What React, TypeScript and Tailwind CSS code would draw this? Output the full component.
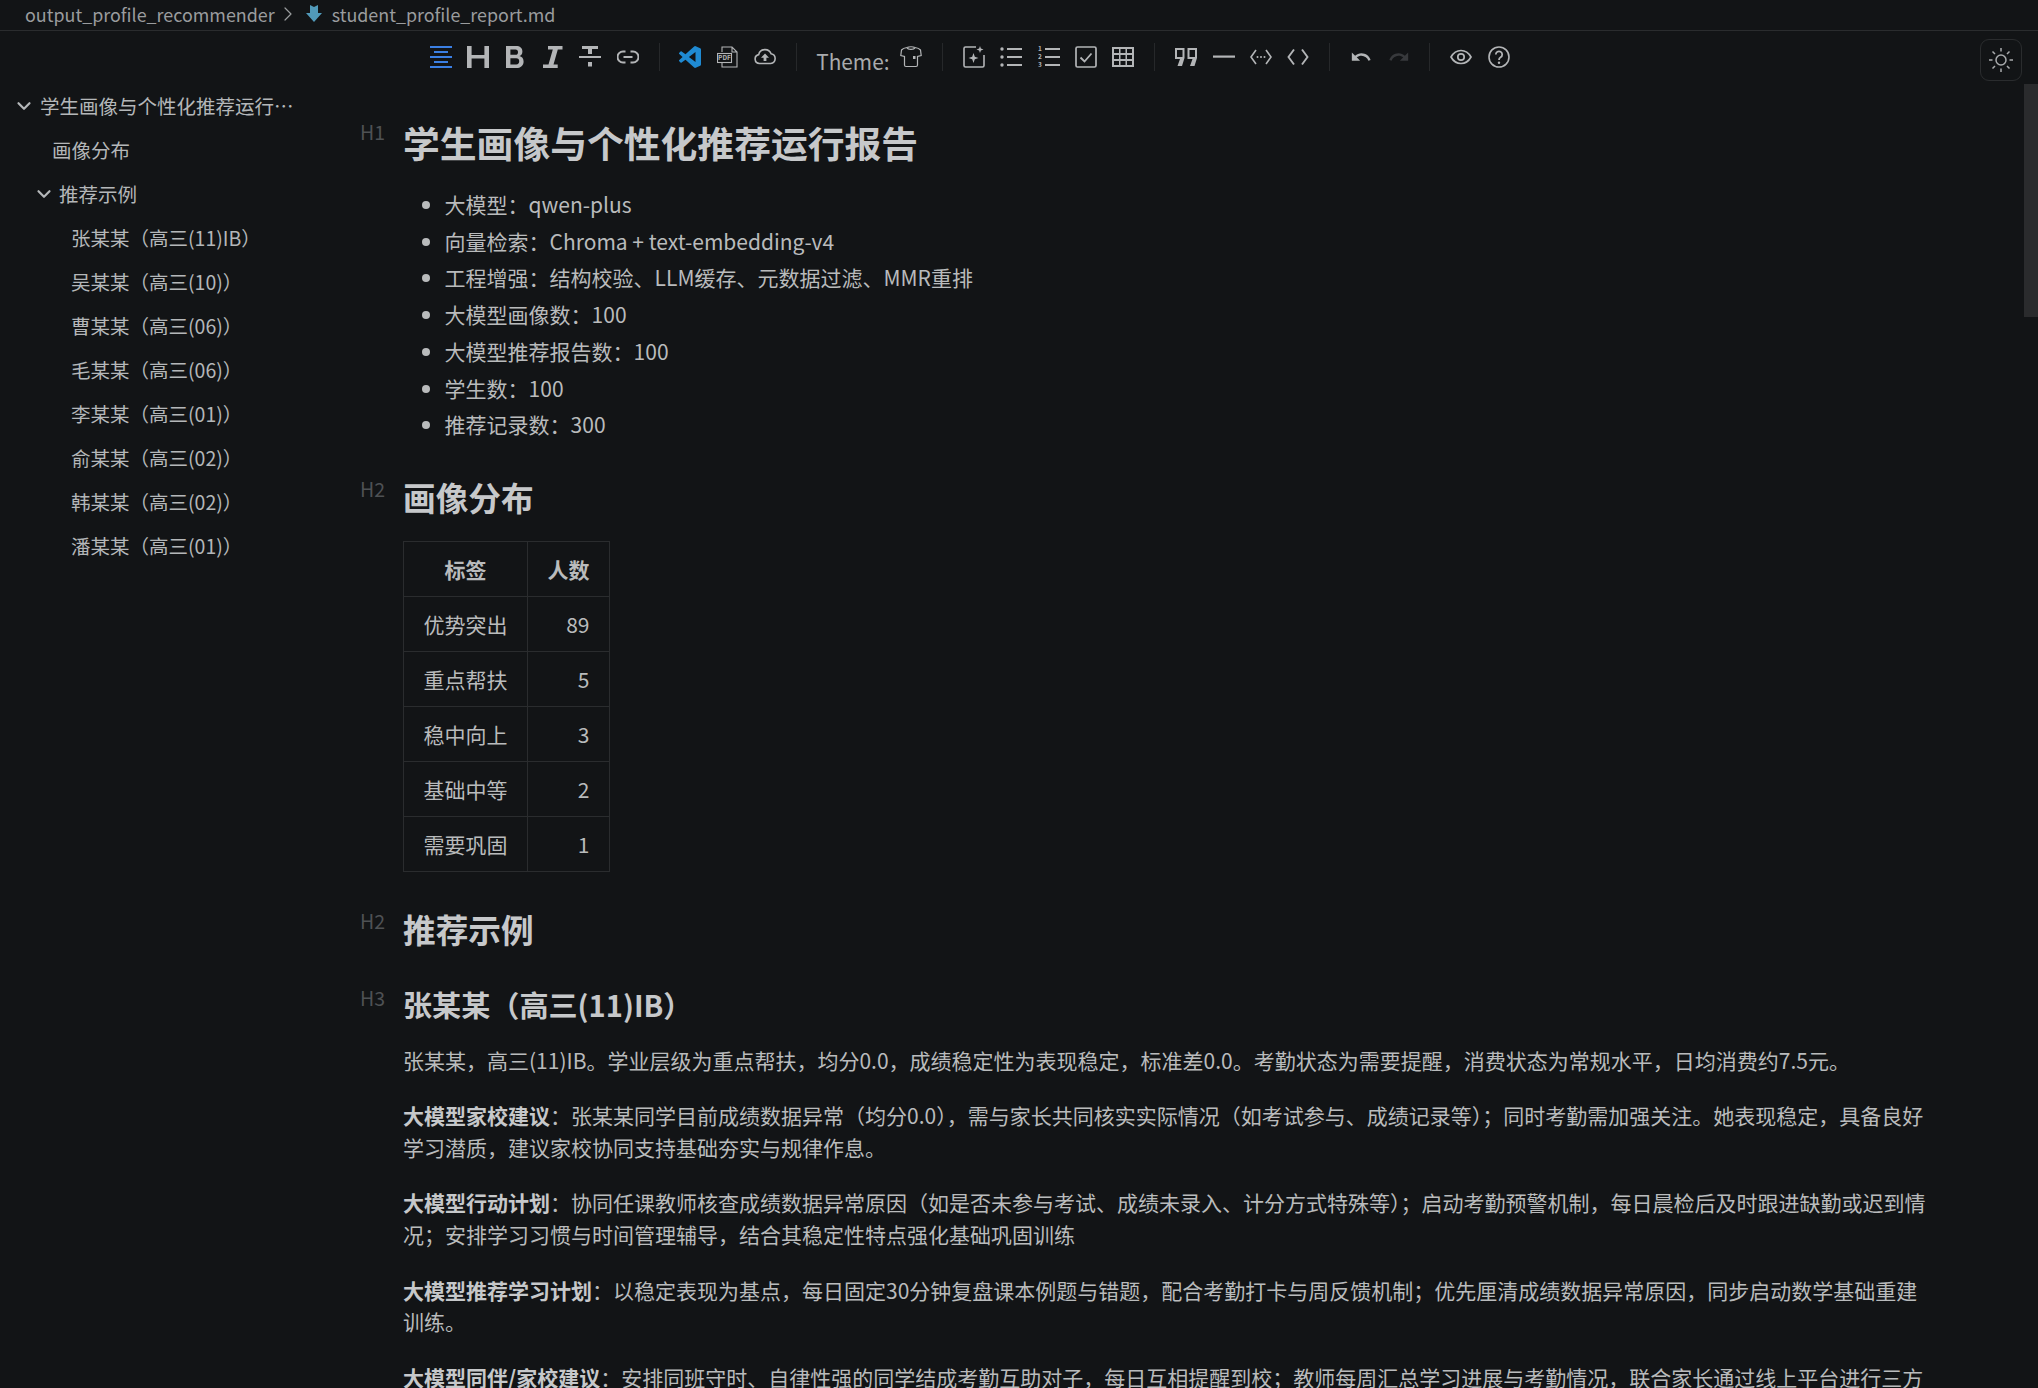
import type { ReactNode } from 'react'
import { ChevronDown, ChevronRight } from 'lucide-react'

// toolbar icons, all on a 22px box
function Svg({ children, vb = '0 0 22 22', cls = 'text-[#b3b5b7]' }: { children: ReactNode; vb?: string; cls?: string }) {
  return (
    <svg viewBox={vb} className={`w-[22px] h-[22px] ${cls}`} fill="currentColor">
      {children}
    </svg>
  )
}

const line = { fill: 'none', stroke: 'currentColor', strokeWidth: 1.6 } as const

const AlignIcon = () => (
  <Svg cls="text-[#3b7fe3]">
    <path d="M0 0h22v2H0zM4 5h14v2H4zM0 10h22v2H0zM4 15h14v2H4zM0 20h22v2H0z" />
  </Svg>
)
const HIcon = () => (
  <Svg>
    <path d="M0 0h4.600v9h12.800V0H22v22h-4.600v-9.600H4.600V22H0z" />
  </Svg>
)
const BIcon = () => (
  <Svg>
    <path fillRule="evenodd" d="M2 0h10c4 0 6.400 2 6.400 5.400 0 2.400-1.200 4-3 4.700 2.600.6 4.200 2.500 4.200 5.300 0 4-2.800 6.600-7.400 6.600H2zM6.400 3.600v5.200h5c1.800 0 2.600-1 2.600-2.600s-.8-2.600-2.600-2.600zM6.400 12.200v6.200h5.800c2 0 3-1.200 3-3.100s-1-3.100-3-3.100z" />
  </Svg>
)
const IIcon = () => (
  <Svg>
    <path d="M6 0h14.500v3.600H15.800L11.500 18.400h4.200V22H1v-3.600h5.500L10.800 3.600H6z" />
  </Svg>
)
const StrikeIcon = () => (
  <Svg>
    <path d="M3 0h16v3h-6v5H9V3H3zM0 10h22v2H0zM9 16h4v4.500H9z" />
  </Svg>
)
const LinkIcon = () => (
  <Svg>
    <path {...line} strokeWidth={2} d="M8.500 5.500H6a5.500 5.500 0 0 0 0 11h2.500M13.500 5.500H16a5.500 5.500 0 0 1 0 11h-2.500M6.500 11h9" />
  </Svg>
)
const VscodeIcon = () => (
  <Svg vb="0 0 24 24" cls="text-[#1f8ad2]">
    <path d="M23.15 2.587L18.21.21a1.494 1.494 0 0 0-1.705.29l-9.46 8.63-4.12-3.128a.999.999 0 0 0-1.276.057L.327 7.261A1 1 0 0 0 .326 8.74L3.899 12 .326 15.26a1 1 0 0 0 .001 1.479L1.65 17.94a.999.999 0 0 0 1.276.057l4.12-3.128 9.46 8.63a1.492 1.492 0 0 0 1.704.29l4.942-2.377A1.5 1.5 0 0 0 24 20.06V3.939a1.5 1.500 0 0 0-.85-1.352zm-5.146 14.861L10.826 12l7.178-5.448v10.896z" />
  </Svg>
)
const PdfIcon = () => (
  <Svg>
    <path {...line} strokeWidth={1.1} d="M5 6V1h10l5 5v15H5v-4M15 1v5h5" />
    <rect x="0.500" y="7.500" width="14" height="9" fill="#121416" stroke="currentColor" strokeWidth="1.100" />
    <text x="7.500" y="14.300" textAnchor="middle" fontSize="6.500" fontWeight="700" fill="currentColor">PDF</text>
  </Svg>
)
const CloudIcon = () => (
  <Svg>
    <path {...line} d="M5.500 17.500a4.500 4.500 0 0 1-.8-8.900 6.500 6.500 0 0 1 12.400-.8 4.900 4.900 0 0 1-.4 9.700z" />
    <path d="M11 7.500l4 4.200h-2.600v3.200H9.600v-3.200H7z" />
  </Svg>
)
const ShirtIcon = () => (
  <Svg>
    <path {...line} strokeWidth={1.200} d="M7 1.500c-2.500.3-4.500 1.300-5.500 2.500L.8 9.500 4.500 10.500V19a1.500 1.500 0 0 0 1.500 1.500h10a1.500 1.500 0 0 0 1.500-1.500V10.500l3.700-1-.7-5.500C19.500 2.800 17.500 1.800 15 1.500c-1 2.500-7 2.500-8 0z" />
    <path {...line} strokeWidth={1.200} d="M7.500 1.500c1-1 6-1 7 0" />
    <rect x="13" y="10" width="2.500" height="3" />
  </Svg>
)
const SparkIcon = () => (
  <Svg>
    <path {...line} strokeWidth={1.600} d="M13 1H2.500A1.500 1.500 0 0 0 1 2.500v17A1.500 1.500 0 0 0 2.500 21h17a1.500 1.500 0 0 0 1.500-1.500V9" />
    <path d="M10.500 7l1.300 3.700 3.700 1.300-3.700 1.300-1.300 3.700-1.300-3.700L5.500 12l3.700-1.300zM17 0l.9 2.600 2.600.9-2.600.9L17 7l-.9-2.600-2.600-.9 2.600-.9z" />
  </Svg>
)
const ListIcon = () => (
  <Svg>
    <circle cx="2" cy="3" r="1.700" />
    <circle cx="2" cy="11" r="1.700" />
    <circle cx="2" cy="19" r="1.700" />
    <path d="M7 2h15v2H7zM7 10h15v2H7zM7 18h15v2H7z" />
  </Svg>
)
const OlIcon = () => (
  <Svg>
    <text x="2" y="5" textAnchor="middle" fontSize="6.500" fontWeight="700" fill="currentColor">1</text>
    <text x="2" y="13" textAnchor="middle" fontSize="6.500" fontWeight="700" fill="currentColor">2</text>
    <text x="2" y="21" textAnchor="middle" fontSize="6.500" fontWeight="700" fill="currentColor">3</text>
    <path d="M7 2h15v2H7zM7 10h15v2H7zM7 18h15v2H7z" />
  </Svg>
)
const CheckIcon = () => (
  <Svg>
    <rect x="1" y="1" width="20" height="20" rx="1.500" {...line} strokeWidth={1.700} />
    <path {...line} strokeWidth={1.800} d="M5.500 11.500l4 4 7-8" />
  </Svg>
)
const TableIcon = () => (
  <Svg>
    <path fillRule="evenodd" d="M0 1h22v20H0zM2 3v4h5V3zM8.500 3v4h5V3zM15 3v4h5V3zM2 9v4h5V9zM8.500 9v4h5V9zM15 9v4h5V9zM2 15v4h5v-4zM8.500 15v4h5v-4zM15 15v4h5v-4z" />
  </Svg>
)
const QuoteIcon = () => (
  <Svg>
    <path fillRule="evenodd" d="M0 2h9.500v10L7 20H2.500L5 13H0zM2 4v7h5.500V4zM12.500 2H22v10l-2.500 8H15l2.500-7h-5zM14.500 4v7H20V4z" />
  </Svg>
)
const HrIcon = () => (
  <Svg>
    <path d="M0 9.500h22v2.200H0z" />
  </Svg>
)
const InlineCodeIcon = () => (
  <Svg>
    <path {...line} d="M6 4L1 11l5 7M16 4l5 7-5 7" />
    <circle cx="7.500" cy="11" r="1" />
    <circle cx="11" cy="11" r="1" />
    <circle cx="14.500" cy="11" r="1" />
  </Svg>
)
const CodeIcon = () => (
  <Svg>
    <path {...line} strokeWidth={1.900} d="M7 3.500L1.500 11 7 18.500M15 3.500l5.500 7.500-5.500 7.500" />
  </Svg>
)
const UndoIcon = () => (
  <Svg vb="0 0 24 24">
    <path d="M12.500 8c-2.650 0-5.050.99-6.900 2.600L2 7v9h9l-3.620-3.620c1.390-1.160 3.160-1.880 5.120-1.880 3.540 0 6.550 2.310 7.600 5.500l2.370-.78C21.080 11.030 17.150 8 12.500 8z" />
  </Svg>
)
const RedoIcon = () => (
  <Svg vb="0 0 24 24" cls="text-[#37393c]">
    <path d="M18.400 10.600C16.550 8.990 14.150 8 11.500 8c-4.650 0-8.580 3.030-9.960 7.220L3.900 16c1.050-3.190 4.050-5.500 7.600-5.500 1.950 0 3.730.72 5.120 1.880L13 16h9V7l-3.600 3.600z" />
  </Svg>
)
const EyeIcon = () => (
  <Svg>
    <path {...line} strokeWidth={1.700} d="M1 11c2.500-4.500 6-6.500 10-6.500S18.500 6.500 21 11c-2.500 4.500-6 6.500-10 6.500S3.500 15.500 1 11z" />
    <circle cx="11" cy="11" r="3.200" {...line} strokeWidth={1.700} />
  </Svg>
)
const HelpIcon = () => (
  <Svg>
    <circle cx="11" cy="11" r="10" {...line} strokeWidth={1.600} />
    <path {...line} strokeWidth={1.800} d="M7.800 8.500a3.200 3.200 0 1 1 4.800 2.800c-1.100.7-1.600 1.300-1.600 2.700" />
    <circle cx="11" cy="16.800" r="1.200" />
  </Svg>
)
const SunIcon = () => (
  <svg viewBox="0 0 24 24" className="w-6 h-6 text-[#a9abad]" fill="none" stroke="currentColor" strokeWidth="1.500">
    <circle cx="12" cy="12" r="5" />
    <path d="M12 0v3.500M12 20.500V24M0 12h3.500M20.500 12H24M3.500 3.500L6 6M18 18l2.500 2.500M3.500 20.500L6 18M18 6l2.500-2.500" />
  </svg>
)
const MdIcon = () => (
  <svg viewBox="0 0 16 17" className="w-4 h-[17px] text-[#519aba]" fill="currentColor">
    <path d="M4 0l4 2 4-2v8h4l-8 9-8-9h4z" />
  </svg>
)

const Btn = ({ children }: { children: ReactNode }) => (
  <div className="w-[37.4px] h-[22px] flex items-center justify-center">{children}</div>
)
const Sep = () => <div className="w-px h-[28px] mx-[12.2px] bg-[#26282a]" />

const outlineItems = [
  '张某某（高三(11)IB）',
  '吴某某（高三(10)）',
  '曹某某（高三(06)）',
  '毛某某（高三(06)）',
  '李某某（高三(01)）',
  '俞某某（高三(02)）',
  '韩某某（高三(02)）',
  '潘某某（高三(01)）',
]

const summary = [
  '大模型：qwen-plus',
  '向量检索：Chroma + text-embedding-v4',
  '工程增强：结构校验、LLM缓存、元数据过滤、MMR重排',
  '大模型画像数：100',
  '大模型推荐报告数：100',
  '学生数：100',
  '推荐记录数：300',
]

const tableRows = [
  ['优势突出', '89'],
  ['重点帮扶', '5'],
  ['稳中向上', '3'],
  ['基础中等', '2'],
  ['需要巩固', '1'],
]

const paragraphs = [
  ['大模型家校建议', '：张某某同学目前成绩数据异常（均分0.0），需与家长共同核实实际情况（如考试参与、成绩记录等）；同时考勤需加强关注。她表现稳定，具备良好学习潜质，建议家校协同支持基础夯实与规律作息。'],
  ['大模型行动计划', '：协同任课教师核查成绩数据异常原因（如是否未参与考试、成绩未录入、计分方式特殊等）；启动考勤预警机制，每日晨检后及时跟进缺勤或迟到情况；安排学习习惯与时间管理辅导，结合其稳定性特点强化基础巩固训练'],
  ['大模型推荐学习计划', '：以稳定表现为基点，每日固定30分钟复盘课本例题与错题，配合考勤打卡与周反馈机制；优先厘清成绩数据异常原因，同步启动数学基础重建训练。'],
  ['大模型同伴/家校建议', '：安排同班守时、自律性强的同学结成考勤互助对子，每日互相提醒到校；教师每周汇总学习进展与考勤情况，联合家长通过线上平台进行三方'],
]

const Tag = ({ children, top }: { children: ReactNode; top: string }) => (
  <span className={`absolute left-[-43px] ${top} text-[19.500px] leading-[26px] font-normal text-[#4e5154]`}>{children}</span>
)

export default function App() {
  return (
    <div className="relative h-[1388px] w-full overflow-hidden flex flex-col bg-[#121416] text-[#b9bbbc] font-['Noto_Sans_CJK_SC','Noto_Sans',sans-serif]">
      {/* breadcrumb */}
      <div className="h-[31px] shrink-0 flex items-center pl-[25px] pb-[3px] border-b border-[#2a2c2e] text-[17.900px] leading-[24px] text-[#9a9c9e]">
        <span>output_profile_recommender</span>
        <ChevronRight className="w-6 h-6 mx-[1px]" strokeWidth={1.200} />
        <span className="ml-[5px] mr-[10px]"><MdIcon /></span>
        <span>student_profile_report.md</span>
      </div>

      {/* toolbar */}
      <div className="h-[53px] shrink-0 flex items-center pl-[422px] pb-[2px] text-[#b3b5b7]">
        <Btn><AlignIcon /></Btn>
        <Btn><HIcon /></Btn>
        <Btn><BIcon /></Btn>
        <Btn><IIcon /></Btn>
        <Btn><StrikeIcon /></Btn>
        <Btn><LinkIcon /></Btn>
        <Sep />
        <Btn><VscodeIcon /></Btn>
        <Btn><PdfIcon /></Btn>
        <Btn><CloudIcon /></Btn>
        <Sep />
        <span className="ml-[7px] mr-[3px] pt-[9px] text-[20.800px] leading-[32px] text-[#a9abad]">Theme:</span>
        <Btn><ShirtIcon /></Btn>
        <Sep />
        <Btn><SparkIcon /></Btn>
        <Btn><ListIcon /></Btn>
        <Btn><OlIcon /></Btn>
        <Btn><CheckIcon /></Btn>
        <Btn><TableIcon /></Btn>
        <Sep />
        <Btn><QuoteIcon /></Btn>
        <Btn><HrIcon /></Btn>
        <Btn><InlineCodeIcon /></Btn>
        <Btn><CodeIcon /></Btn>
        <Sep />
        <Btn><UndoIcon /></Btn>
        <Btn><RedoIcon /></Btn>
        <Sep />
        <Btn><EyeIcon /></Btn>
        <Btn><HelpIcon /></Btn>
      </div>

      <div className="absolute left-[1980px] top-[39px] w-[42px] h-[42px] rounded-[9px] border border-[#2a2c2e] flex items-center justify-center">
        <SunIcon />
      </div>
      <div className="absolute right-0 top-[84px] w-[14px] h-[233px] bg-[#2a2b2d]" />

      <div className="flex-1 flex min-h-0">
        {/* outline */}
        <aside className="w-[320px] shrink-0 text-[19.500px] text-[#b4b7b9]">
          <div className="h-[44px] flex items-center pl-[13px]">
            <ChevronDown className="w-[22px] h-[22px] mr-[5px] shrink-0" strokeWidth={2.400} />
            <span className="w-[255px] truncate">学生画像与个性化推荐运行报告</span>
          </div>
          <div className="h-[44px] flex items-center pl-[52px]">画像分布</div>
          <div className="h-[44px] flex items-center pl-[33px]">
            <ChevronDown className="w-[22px] h-[22px] mr-[4px] shrink-0" strokeWidth={2.400} />
            推荐示例
          </div>
          {outlineItems.map((name) => (
            <div key={name} className="h-[44px] flex items-center pl-[71px]">{name}</div>
          ))}
        </aside>

        {/* editor */}
        <main className="flex-1 min-w-0 pl-[83px] pt-[31px]">
          <div className="w-[1525px]">
            <h1 className="relative text-[36.800px] leading-[55.200px] font-bold text-[#c6c8ca]">
              <Tag top="top-[4px]">H1</Tag>
              学生画像与个性化推荐运行报告
            </h1>
            <ul className="mt-[18.500px] list-disc pl-[41.600px] text-[21px] leading-[31.500px]">
              {summary.map((s, i) => (
                <li key={s} className={i > 0 ? 'mt-[5.300px]' : ''}>{s}</li>
              ))}
            </ul>

            <h2 className="relative mt-[31px] text-[32.700px] leading-[49px] font-bold text-[#c6c8ca]">
              <Tag top="top-[4px]">H2</Tag>
              画像分布
            </h2>
            <table className="mt-[20.500px] border-collapse whitespace-nowrap text-[21px] leading-[31.500px]">
              <thead>
                <tr className="h-[55px]">
                  <th className="w-[124px] border border-[#2a2c2e] px-[19.500px] text-center font-bold">标签</th>
                  <th className="w-[82px] border border-[#2a2c2e] px-[19.500px] text-right font-bold">人数</th>
                </tr>
              </thead>
              <tbody>
                {tableRows.map(([label, n]) => (
                  <tr key={label} className="h-[55px]">
                    <td className="border border-[#2a2c2e] px-[19.500px] text-center">{label}</td>
                    <td className="border border-[#2a2c2e] px-[19.500px] text-right">{n}</td>
                  </tr>
                ))}
              </tbody>
            </table>

            <h2 className="relative mt-[32px] text-[32.700px] leading-[49px] font-bold text-[#c6c8ca]">
              <Tag top="top-[4px]">H2</Tag>
              推荐示例
            </h2>
            <h3 className="relative mt-[30px] text-[29.100px] leading-[43.600px] font-bold text-[#c6c8ca]">
              <Tag top="top-[2px]">H3</Tag>
              张某某（高三(11)IB）
            </h3>
            <div className="mt-[17.500px] flex flex-col gap-[24.500px] text-[21px] leading-[31.300px]">
              <p>张某某，高三(11)IB。学业层级为重点帮扶，均分0.0，成绩稳定性为表现稳定，标准差0.0。考勤状态为需要提醒，消费状态为常规水平，日均消费约7.5元。</p>
              {paragraphs.map(([title, body]) => (
                <p key={title}>
                  <strong className="font-bold text-[#c6c8ca]">{title}</strong>
                  {body}
                </p>
              ))}
            </div>
          </div>
        </main>
      </div>
    </div>
  )
}
